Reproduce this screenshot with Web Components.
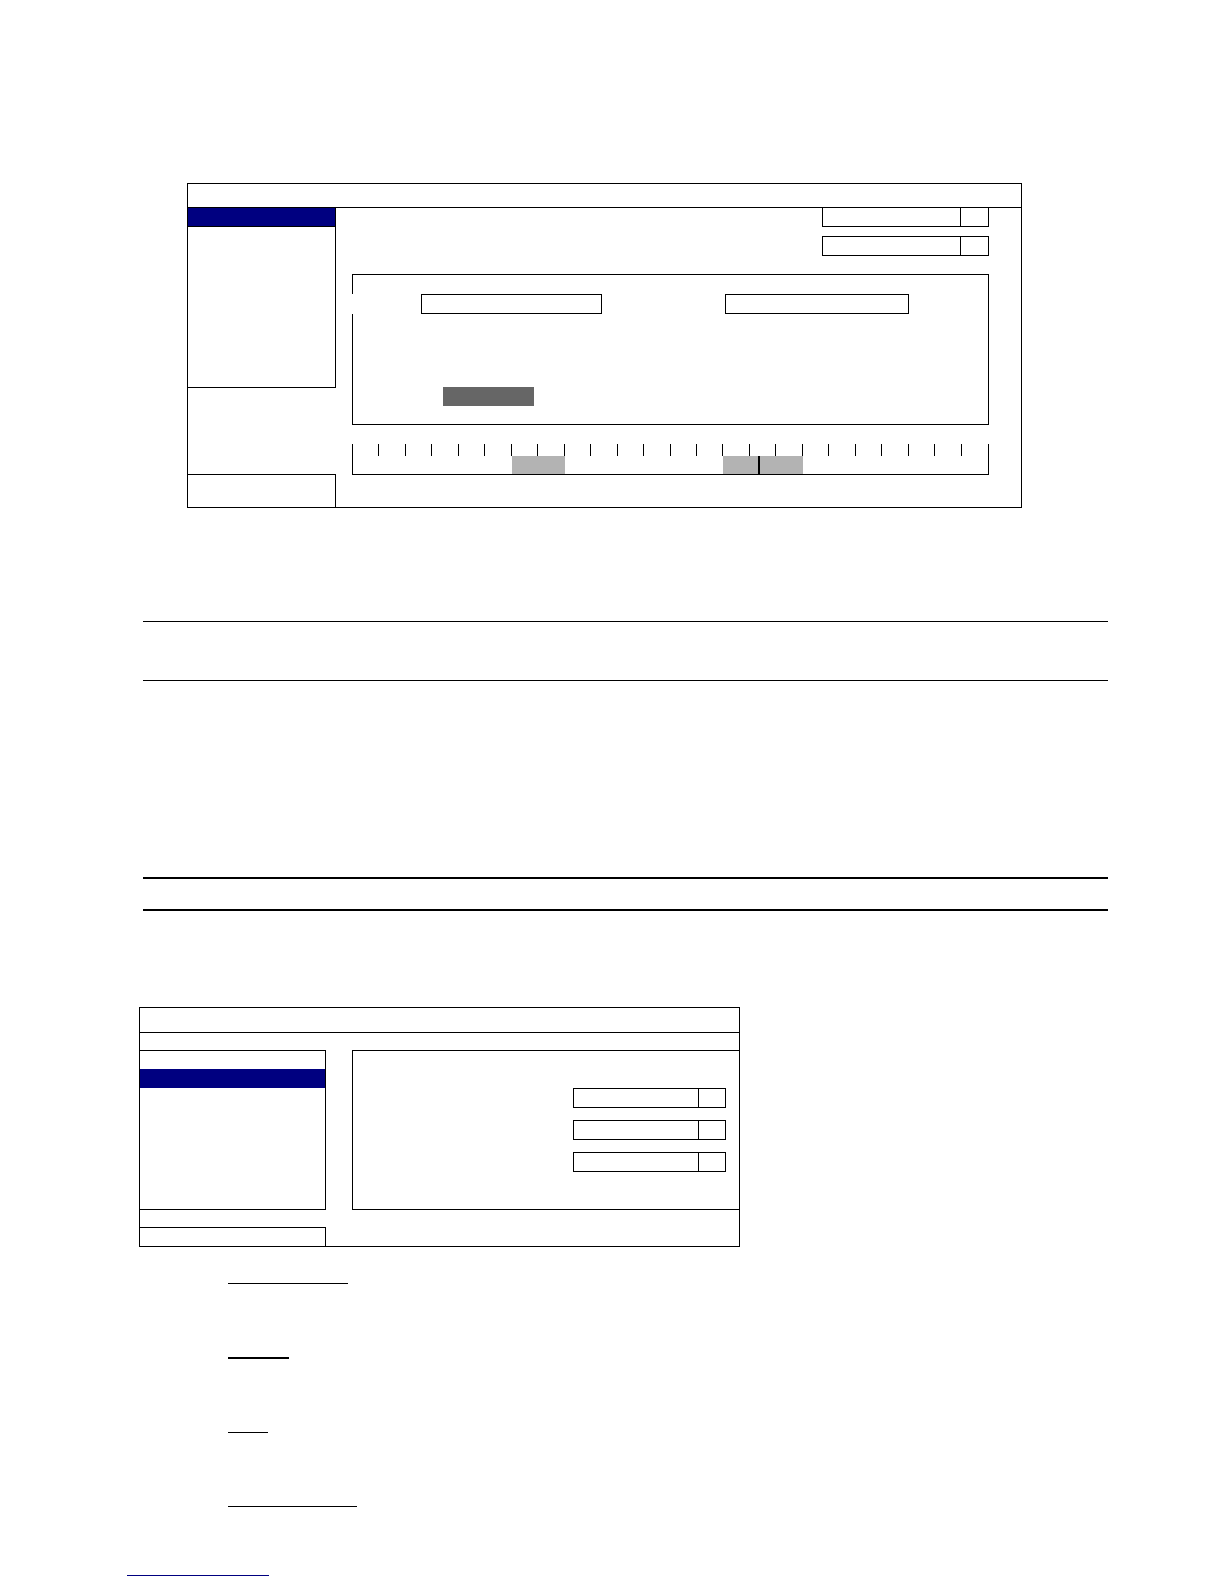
<!DOCTYPE html>
<html lang="en">
<head>
  <meta charset="UTF-8">
  <meta name="viewport" content="width=device-width, initial-scale=1.0">
  <title>Schedule</title>
  <style>
    body {
      margin: 0;
      background: #FFFFFF;
      color: #000000;
      font-family: "Liberation Sans", Arial, sans-serif;
      font-size: 12px;
    }
  </style>
</head>
<body>
  <schedule-page></schedule-page>

  <script>
    // Drop-down with a separate arrow cell
    class PickBox extends HTMLElement {
      connectedCallback() {
        this.attachShadow({ mode: 'open' });

        this.shadowRoot.innerHTML = `
          <style>
            :host {
              display: grid;
              grid-template-columns: 1fr var(--arrow, 27px);
              box-sizing: border-box;
              height: 20px;
              border: 1px solid #000000;
            }

            :host([joined]) {
              height: 19px;
              border-top: 0;
            }

            select {
              appearance: none;
              width: 100%;
              min-width: 0;
              height: 100%;
              padding: 0 4px;
              border: 0;
              background: none;
              font: inherit;
            }

            span {
              border-left: 1px solid #000000;
              margin-left: -1px;
            }
          </style>

          <select aria-label="${this.getAttribute('label')}"><option></option></select>
          <span></span>
        `;
      }
    }

    // Outlined window with a title bar
    class WindowFrame extends HTMLElement {
      connectedCallback() {
        this.attachShadow({ mode: 'open' });

        this.shadowRoot.innerHTML = `
          <style>
            :host {
              display: block;
              border: 1px solid #000000;
            }

            header {
              height: var(--title-height, 23px);
              border-bottom: 1px solid #000000;
            }
          </style>

          <header></header>
          <slot></slot>
        `;
      }
    }

    class SideList extends HTMLElement {
      connectedCallback() {
        this.attachShadow({ mode: 'open' });

        this.shadowRoot.innerHTML = `
          <style>
            :host {
              display: flex;
              flex-direction: column;
            }

            nav, footer {
              box-sizing: border-box;
              border-right: 1px solid #000000;
            }

            nav {
              height: var(--list-height);
              padding-top: var(--list-top, 0);
              border-bottom: 1px solid #000000;
            }

            footer {
              height: var(--foot-height);
              margin-top: auto;
              border-top: 1px solid #000000;
            }

            button {
              display: block;
              width: 100%;
              height: 19px;
              padding: 0;
              border: 0;
              background: #000080;
            }

            :host([ruled]) nav { border-top: 1px solid #000000; }
            :host([underlined]) button { border-bottom: 1px solid #000000; }
          </style>

          <nav><button type="button" aria-label="Selected item"></button></nav>
          <footer></footer>
        `;
      }
    }

    // 24 hour ruler with the booked spans under it
    class TimeRuler extends HTMLElement {
      connectedCallback() {
        this.attachShadow({ mode: 'open' });

        this.shadowRoot.innerHTML = `
          <style>
            :host {
              display: block;
              border: solid #000000;
              border-width: 0 1px 1px;
            }

            .ticks, .track {
              display: grid;
              grid-template-columns: repeat(24, 1fr);
            }

            .ticks { height: 12px; }
            .track { height: 18px; }
            .ticks i { border-right: 1px solid #000000; }
            .ticks i:last-child { border: 0; }
            .span { background: #B3B3B3; }
            .morning { grid-column: 7 / 9; }

            .afternoon {
              grid-column: 15 / 18;
              display: grid;
              grid-template-columns: 34fr 2px 43fr;
            }

            .now {
              grid-column: 2;
              background: #000000;
            }
          </style>

          <div class="ticks">${'<i></i>'.repeat(24)}</div>
          <div class="track">
            <div class="span morning"></div>
            <div class="span afternoon"><div class="now"></div></div>
          </div>
        `;
      }
    }

    class SchedulePanel extends HTMLElement {
      connectedCallback() {
        this.attachShadow({ mode: 'open' });

        this.shadowRoot.innerHTML = `
          <style>
            :host {
              display: block;
              border: solid #000000;
              border-width: 1px 1px 1px 0;
            }

            .top, .bottom { border-left: 1px solid #000000; }
            .top { height: 19px; }
            .bottom { padding: 73px 0 18px 90px; }

            .fields {
              display: grid;
              grid-template-columns: 68fr 181fr 123fr 184fr 79fr;
              padding-left: 1px;
            }

            input {
              box-sizing: border-box;
              width: 100%;
              height: 20px;
              padding: 0 4px;
              border: 1px solid #000000;
              font: inherit;
            }

            .start { grid-column: 2; }
            .end { grid-column: 4; }

            button {
              display: block;
              width: 91px;
              height: 19px;
              border: 0;
              background: #666666;
            }
          </style>

          <div class="top"></div>
          <div class="fields">
            <input class="start" type="text" aria-label="Start">
            <input class="end" type="text" aria-label="End">
          </div>
          <div class="bottom"><button type="button" aria-label="Apply"></button></div>
        `;
      }
    }

    class SchedulePage extends HTMLElement {
      connectedCallback() {
        this.attachShadow({ mode: 'open' });

        this.shadowRoot.innerHTML = `
          <style>
            :host {
              display: block;
              padding: 183px 0 8px;
            }

            .schedule { margin: 0 202px 0 187px; }

            .schedule .body {
              display: grid;
              grid-template-columns: 148px 1fr;
            }

            .schedule side-list {
              --list-height: 180px;
              --foot-height: 33px;
            }

            .content { padding: 0 32px 32px 16px; }

            .picks {
              display: grid;
              grid-template-columns: 167px;
              justify-content: end;
              gap: 9px;
              margin-bottom: 18px;
            }

            time-ruler { margin-top: 19px; }

            .note, .strip {
              box-sizing: border-box;
              margin: 0 116px 0 143px;
              border: solid #000000;
            }

            .note {
              height: 60px;
              margin-top: 113px;
              border-width: 1px 0;
            }

            .strip {
              height: 34px;
              margin-top: 196px;
              border-width: 2px 0;
            }

            .settings {
              --title-height: 24px;
              max-width: 599px;
              margin: 96px 24px 0 139px;
            }

            .settings .body {
              display: grid;
              grid-template-columns: 186px 1fr;
              column-gap: 26px;
              padding-top: 17px;
            }

            .settings side-list {
              --list-height: 160px;
              --list-top: 18px;
              --foot-height: 19px;
            }

            .options {
              display: grid;
              grid-template-columns: 153px;
              justify-content: end;
              align-content: start;
              gap: 12px;
              box-sizing: border-box;
              height: 160px;
              margin-bottom: 36px;
              padding: 37px 13px 0 0;
              border: solid #000000;
              border-width: 1px 0 1px 1px;
              --arrow: 26px;
            }

            .terms {
              display: grid;
              gap: 73px;
              margin: 36px 0 68px 228px;
            }

            .terms div { border-top: 1px solid #000000; }
            .terms .network { width: 120px; }
            .terms .mode { width: 61px; border-top-width: 2px; }
            .terms .port { width: 40px; }
            .terms .address { width: 129px; }

            a {
              display: block;
              width: 142px;
              margin-left: 127px;
              border-top: 1px solid #000080;
            }
          </style>

          <window-frame class="schedule">
            <div class="body">
              <side-list underlined></side-list>
              <div class="content">
                <div class="picks">
                  <pick-box joined label="Camera"></pick-box>
                  <pick-box label="Day"></pick-box>
                </div>
                <schedule-panel></schedule-panel>
                <time-ruler></time-ruler>
              </div>
            </div>
          </window-frame>

          <div class="note"></div>
          <div class="strip"></div>

          <window-frame class="settings">
            <div class="body">
              <side-list ruled></side-list>
              <div class="options">
                <pick-box label="First option"></pick-box>
                <pick-box label="Second option"></pick-box>
                <pick-box label="Third option"></pick-box>
              </div>
            </div>
          </window-frame>

          <div class="terms">
            <div class="network"></div>
            <div class="mode"></div>
            <div class="port"></div>
            <div class="address"></div>
          </div>

          <a href="#" aria-label="Contents"></a>
        `;
      }
    }

    customElements.define('pick-box', PickBox);
    customElements.define('window-frame', WindowFrame);
    customElements.define('side-list', SideList);
    customElements.define('time-ruler', TimeRuler);
    customElements.define('schedule-panel', SchedulePanel);
    customElements.define('schedule-page', SchedulePage);
  </script>
</body>
</html>
